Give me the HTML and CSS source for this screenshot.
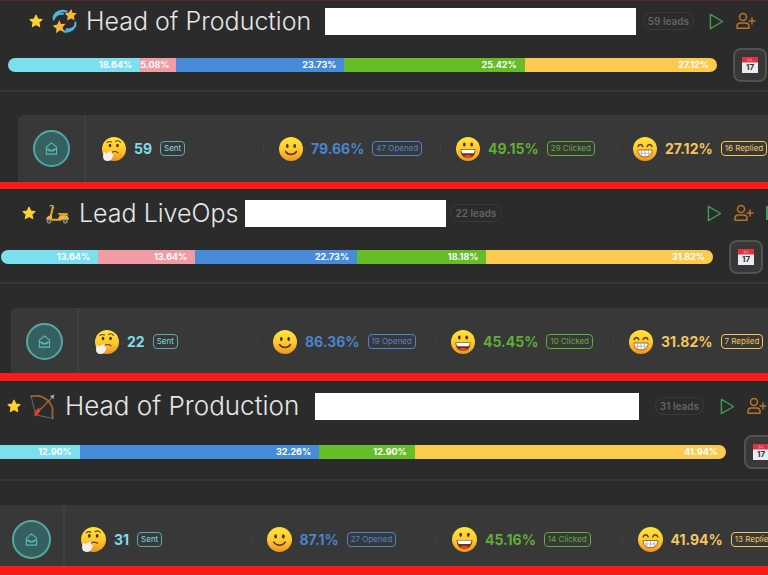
FILE: index.html
```
<!DOCTYPE html>
<html lang="en">
<head>
    <meta charset="UTF-8">
    <meta name="viewport" content="width=device-width, initial-scale=1.0">
    <title>Campaigns</title>
    <link rel="stylesheet" href="styles.css">
</head>
<body>
    <!-- shared icons -->
    <svg class="sprite" aria-hidden="true">
        <defs>
            <linearGradient id="face" x1="0" y1="0" x2="0" y2="1">
                <stop offset="0" stop-color="#ffe53b"/>
                <stop offset="0.55" stop-color="#fdc72e"/>
                <stop offset="1" stop-color="#ee9324"/>
            </linearGradient>
        </defs>
        <symbol id="star" viewBox="0 0 24 24">
            <path fill="#ffd22e" stroke="#ffd22e" stroke-width="2" stroke-linejoin="round" d="M12 2l3 6.700 7.200.8-5.400 4.900 1.500 7.100L12 17.900 5.700 21.500l1.500-7.100L1.800 9.500 9 8.700z"/>
        </symbol>
        <symbol id="dizzy" viewBox="0 0 24 24">
            <path fill="none" stroke="#4fb3dc" stroke-width="2" stroke-linecap="round" d="M1.500 8C3 2.500 9 .8 14 2.500M1.500 10c1-4 5-6 9-5.500M22.500 13c0 6-5 9.500-11 8.500M22.500 16c-2 3-5 4-8.500 3.500"/>
            <path fill="#fbb63a" d="M18.500 0l1.200 3.500 4.100.5-2.800 2.800.8 4-3.600-1.700-3.600 2 .5-4.100-2.900-2.800 4-.9zM7 10.500l1.600 4 4.400-.3-2.900 3.500 1.700 4.200-4.200-1.600-3.600 2.900.2-4.600L.5 16l4.600-1.200z"/>
        </symbol>
        <symbol id="scooter" viewBox="0 0 24 24">
            <path fill="none" stroke="#b9a27a" stroke-width="1.300" stroke-linecap="round" d="M5 4.500h2.500l.5 2"/>
            <path fill="none" stroke="#e6a92c" stroke-width="2" stroke-linecap="round" stroke-linejoin="round" d="M7.500 6l-2.500 11M7 18h8"/>
            <path fill="#efb536" d="M1 18c.5-3.500 3-4.500 5.500-4l.5 4zM12.500 18c0-3 2-4.500 5-4.500 3.500 0 5.500 1.500 5.500 4.500z"/>
            <path fill="#d99a2b" d="M12.500 11.500h9l1 2.500h-9z"/>
            <circle cx="4" cy="19.500" r="2.300" fill="#8d8d8d"/><circle cx="4" cy="19.500" r="1" fill="#333"/>
            <circle cx="19.500" cy="19.500" r="2.300" fill="#8d8d8d"/><circle cx="19.500" cy="19.500" r="1" fill="#333"/>
        </symbol>
        <symbol id="bow" viewBox="0 0 24 24">
            <path fill="none" stroke="#777" stroke-width="0.800" d="M1 2l4.500 18L22 23.500"/>
            <path fill="none" stroke="#9a6435" stroke-width="1.700" stroke-linecap="round" d="M1 2c3 .8 5-1.500 10 .5 5 2 9 6 10.500 11 .8 4-1 6 .5 10"/>
            <path stroke="#a5673a" stroke-width="1.200" d="M6 19L22 2.500"/>
            <path fill="#a4a7aa" d="M23.500.5l-1 4.500-3.500-3z"/>
            <path fill="#e0402b" d="M4 21l1-5 4-3 .5 3.500-2.500 4z"/>
        </symbol>
        <symbol id="thinking" viewBox="0 0 24 24">
            <circle cx="12" cy="12" r="12" fill="url(#face)"/>
            <ellipse cx="8" cy="8.500" rx="1.300" ry="1.800" fill="#4a2d12"/>
            <ellipse cx="15.500" cy="8.500" rx="1.300" ry="1.800" fill="#4a2d12"/>
            <path fill="none" stroke="#6b3f12" stroke-width="1.100" stroke-linecap="round" d="M5 5.500c1.500-1.200 3-1.300 4.500-.5M13.500 4.500c2-1.200 3.800-.8 5 .8M9.500 15.500c2-1.200 4.500-1.200 6.500.2"/>
            <path fill="#f3efe9" d="M1.500 15.500c.8-.8 2-.3 2.200 1l4.800-2.300c1.500-.4 2 1.200.8 2l1.700.8c.8 1.300.3 2.300-.5 3-.5 2.700-2.500 4-5 4-3 0-4.500-1.700-4.500-4.500z"/>
        </symbol>
        <symbol id="smile" viewBox="0 0 24 24">
            <circle cx="12" cy="12" r="12" fill="url(#face)"/>
            <ellipse cx="8.300" cy="9" rx="1.300" ry="2" fill="#4a2d12"/>
            <ellipse cx="15.700" cy="9" rx="1.300" ry="2" fill="#4a2d12"/>
            <path fill="none" stroke="#5b3411" stroke-width="1.400" stroke-linecap="round" d="M6.500 14.500c2.800 4 8.200 4 11 0"/>
        </symbol>
        <symbol id="grin" viewBox="0 0 24 24">
            <circle cx="12" cy="12" r="12" fill="url(#face)"/>
            <ellipse cx="8.300" cy="7.500" rx="1.300" ry="2" fill="#4a2d12"/>
            <ellipse cx="15.700" cy="7.500" rx="1.300" ry="2" fill="#4a2d12"/>
            <path fill="#6b3114" d="M4.500 12.500h15c0 5-3 8.500-7.500 8.500s-7.500-3.500-7.500-8.500z"/>
            <path fill="#fff" d="M5.300 13h13.400c0 1.800-.6 3.200-1.500 3.200H6.800c-.9 0-1.500-1.400-1.500-3.200z"/>
            <path fill="#e0502e" d="M8 19.300c2-1.800 6-1.800 8 0-2.400 2-5.600 2-8 0z"/>
        </symbol>
        <symbol id="beam" viewBox="0 0 24 24">
            <circle cx="12" cy="12" r="12" fill="url(#face)"/>
            <path fill="none" stroke="#5b3411" stroke-width="1.400" stroke-linecap="round" d="M5 9.500c.8-2.700 4-2.700 4.800 0M14.200 9.500c.8-2.700 4-2.700 4.800 0"/>
            <path fill="#fff" stroke="#8a4d1a" stroke-width="0.800" stroke-linejoin="round" d="M5 13h14c.3 4-2.500 6.800-7 6.800S4.700 17 5 13z"/>
            <path fill="none" stroke="#a8a29a" stroke-width="0.700" d="M5.500 16.300h13M8.500 13v6M12 13v6.500M15.500 13v6"/>
        </symbol>
        <symbol id="play" viewBox="0 0 16 18">
            <path fill="none" stroke="currentColor" stroke-width="1.500" stroke-linejoin="round" d="M1.500 1.500v15l13-7.500z"/>
        </symbol>
        <symbol id="add-user" viewBox="0 0 20 18">
            <g fill="none" stroke="currentColor" stroke-width="1.500" stroke-linecap="round" stroke-linejoin="round">
                <circle cx="7" cy="5" r="3.500"/>
                <path d="M4.500 11h5c2.300 0 3.500 1.500 3.500 3.300v1.900H1v-1.900C1 12.500 2.200 11 4.500 11zM16 6v6M13 9h6"/>
            </g>
        </symbol>
        <symbol id="calendar" viewBox="0 0 18 18">
            <path fill="#e8edf2" d="M1 5h16v12H1z"/>
            <path fill="#dd3440" d="M1 1h16v5.500H1z"/>
            <path fill="none" stroke="#f08a8f" stroke-width="0.900" d="M6.500 3h1.500v2H6.500M10 2.500v2.500h1.500"/>
        </symbol>
        <symbol id="mail" viewBox="0 0 14 14">
            <g fill="none" stroke="currentColor" stroke-width="1.200" stroke-linejoin="round" stroke-linecap="round">
                <path d="M1.500 5.500L7 1l5.500 4.500V13h-11zM1.500 7L5 9.500h4L12.500 7M4 7.500c1.500 2.200 4.500 2.200 6 0"/>
            </g>
        </symbol>
    </svg>

    <main class="campaigns">
        <section class="campaign campaign-first">
            <header class="campaign-head">
                <button class="icon-btn" type="button" aria-label="Favourite"><svg class="star"><use href="#star"/></svg></button>
                <svg class="title-emoji"><use href="#dizzy"/></svg>
                <h2 class="title">Head of Production</h2>
                <div class="hidden-name"></div>
                <span class="leads">59 leads</span>
                <div class="actions">
                    <button class="icon-btn green" type="button" aria-label="Start"><svg class="play"><use href="#play"/></svg></button>
                    <button class="icon-btn orange" type="button" aria-label="Add lead"><svg class="add-user"><use href="#add-user"/></svg></button>
                </div>
            </header>
            <div class="progress-row">
                <div class="progress">
                    <div class="segment seg-sent" style="width: 18.64%">18.64%</div>
                    <div class="segment seg-bounced" style="width: 5.08%">5.08%</div>
                    <div class="segment seg-opened" style="width: 23.73%">23.73%</div>
                    <div class="segment seg-clicked" style="width: 25.42%">25.42%</div>
                    <div class="segment seg-replied" style="width: 27.12%">27.12%</div>
                </div>
                <button class="calendar-btn" type="button" aria-label="Schedule"><svg><use href="#calendar"/><text class="cal-day" x="9" y="14" text-anchor="middle">17</text></svg></button>
            </div>
            <div class="stats">
                <div class="stage"><span class="stage-icon"><svg><use href="#mail"/></svg></span></div>
                <div class="stat sent"><svg class="emoji"><use href="#thinking"/></svg><strong>59</strong><span class="tag">Sent</span></div>
                <div class="stat opened"><svg class="emoji"><use href="#smile"/></svg><strong>79.66%</strong><span class="tag">47 Opened</span></div>
                <div class="stat clicked"><svg class="emoji"><use href="#grin"/></svg><strong>49.15%</strong><span class="tag">29 Clicked</span></div>
                <div class="stat replied"><svg class="emoji"><use href="#beam"/></svg><strong>27.12%</strong><span class="tag">16 Replied</span></div>
            </div>
        </section>

        <section class="campaign campaign-second">
            <header class="campaign-head">
                <button class="icon-btn" type="button" aria-label="Favourite"><svg class="star"><use href="#star"/></svg></button>
                <svg class="title-emoji"><use href="#scooter"/></svg>
                <h2 class="title">Lead LiveOps</h2>
                <div class="hidden-name"></div>
                <span class="leads">22 leads</span>
                <div class="actions">
                    <button class="icon-btn green" type="button" aria-label="Start"><svg class="play"><use href="#play"/></svg></button>
                    <button class="icon-btn orange" type="button" aria-label="Add lead"><svg class="add-user"><use href="#add-user"/></svg></button>
                    <span class="more"></span>
                </div>
            </header>
            <div class="progress-row">
                <div class="progress">
                    <div class="segment seg-sent" style="width: 13.64%">13.64%</div>
                    <div class="segment seg-bounced" style="width: 13.64%">13.64%</div>
                    <div class="segment seg-opened" style="width: 22.73%">22.73%</div>
                    <div class="segment seg-clicked" style="width: 18.18%">18.18%</div>
                    <div class="segment seg-replied" style="width: 31.82%">31.82%</div>
                </div>
                <button class="calendar-btn" type="button" aria-label="Schedule"><svg><use href="#calendar"/><text class="cal-day" x="9" y="14" text-anchor="middle">17</text></svg></button>
            </div>
            <div class="stats">
                <div class="stage"><span class="stage-icon"><svg><use href="#mail"/></svg></span></div>
                <div class="stat sent"><svg class="emoji"><use href="#thinking"/></svg><strong>22</strong><span class="tag">Sent</span></div>
                <div class="stat opened"><svg class="emoji"><use href="#smile"/></svg><strong>86.36%</strong><span class="tag">19 Opened</span></div>
                <div class="stat clicked"><svg class="emoji"><use href="#grin"/></svg><strong>45.45%</strong><span class="tag">10 Clicked</span></div>
                <div class="stat replied"><svg class="emoji"><use href="#beam"/></svg><strong>31.82%</strong><span class="tag">7 Replied</span></div>
            </div>
        </section>

        <section class="campaign campaign-third">
            <header class="campaign-head">
                <button class="icon-btn" type="button" aria-label="Favourite"><svg class="star"><use href="#star"/></svg></button>
                <svg class="title-emoji"><use href="#bow"/></svg>
                <h2 class="title">Head of Production</h2>
                <div class="hidden-name"></div>
                <span class="leads">31 leads</span>
                <div class="actions">
                    <button class="icon-btn green" type="button" aria-label="Start"><svg class="play"><use href="#play"/></svg></button>
                    <button class="icon-btn orange" type="button" aria-label="Add lead"><svg class="add-user"><use href="#add-user"/></svg></button>
                </div>
            </header>
            <div class="progress-row">
                <div class="progress">
                    <div class="segment seg-sent" style="width: 12.90%">12.90%</div>
                    <div class="segment seg-opened" style="width: 32.26%">32.26%</div>
                    <div class="segment seg-clicked" style="width: 12.90%">12.90%</div>
                    <div class="segment seg-replied" style="width: 41.94%">41.94%</div>
                </div>
                <button class="calendar-btn" type="button" aria-label="Schedule"><svg><use href="#calendar"/><text class="cal-day" x="9" y="14" text-anchor="middle">17</text></svg></button>
            </div>
            <div class="stats">
                <div class="stage"><span class="stage-icon"><svg><use href="#mail"/></svg></span></div>
                <div class="stat sent"><svg class="emoji"><use href="#thinking"/></svg><strong>31</strong><span class="tag">Sent</span></div>
                <div class="stat opened"><svg class="emoji"><use href="#smile"/></svg><strong>87.1%</strong><span class="tag">27 Opened</span></div>
                <div class="stat clicked"><svg class="emoji"><use href="#grin"/></svg><strong>45.16%</strong><span class="tag">14 Clicked</span></div>
                <div class="stat replied"><svg class="emoji"><use href="#beam"/></svg><strong>41.94%</strong><span class="tag">13 Replied</span></div>
            </div>
        </section>
    </main>
</body>
</html>
```

FILE: styles.css
```
* {
    box-sizing: border-box;
}
body {
    margin: 0;
    background-color: #fb1a1a;
    font-family: Inter, "Liberation Sans", sans-serif;
    overflow: hidden;
}
button {
    font: inherit;
    cursor: pointer;
}
svg {
    display: block;
    flex-shrink: 0;
}
.sprite {
    position: absolute;
    width: 0;
    height: 0;
}
.campaigns {
    display: flex;
    flex-direction: column;
    gap: 7px;
}
.campaign {
    background-color: #2b2b2b;
    overflow: hidden;
}

/* header */
.campaign-head {
    display: flex;
    align-items: center;
    height: 30px;
}
.icon-btn {
    display: block;
    padding: 0;
    border: none;
    background: none;
}
.star {
    width: 14px;
    height: 14px;
}
.title-emoji {
    width: 25px;
    height: 25px;
    margin: 0 9px;
}
.title {
    margin: 0;
    color: #e6e6e6;
    font-size: 25px;
    line-height: 30px;
    font-weight: 300;
    white-space: nowrap;
}
.hidden-name {
    height: 27px;
    background-color: #fff;
    margin-left: auto;
}
.leads {
    padding: 0 4px;
    border: 1px solid #393939;
    border-radius: 9px;
    color: #636363;
    font-size: 10px;
    line-height: 16px;
    font-weight: 600;
    white-space: nowrap;
}
.actions {
    display: flex;
    align-items: center;
    gap: 12px;
}
.green {
    color: #3f9d55;
}
.orange {
    color: #b8742c;
}
.play {
    width: 15px;
    height: 17px;
}
.add-user {
    width: 20px;
    height: 18px;
}
.more {
    width: 2px;
    height: 14px;
    background-color: #3f9d55;
}

/* progress */
.progress-row {
    display: flex;
    align-items: center;
    gap: 16px;
    border-bottom: 2px solid #363636;
}
.progress {
    display: flex;
    flex: 1;
    height: 14px;
    border-radius: 7px;
    overflow: hidden;
}
.segment {
    padding-right: 8px;
    color: #fff;
    font-size: 9px;
    line-height: 14px;
    font-weight: 700;
    text-align: right;
    white-space: nowrap;
}
.seg-sent {
    background-color: #7bdff0;
}
.seg-bounced {
    background-color: #f19ca4;
}
.seg-opened {
    background-color: #488bd8;
}
.seg-clicked {
    background-color: #66bd28;
}
.seg-replied {
    background-color: #fbcb4f;
}
.calendar-btn {
    display: flex;
    align-items: center;
    justify-content: center;
    flex-shrink: 0;
    width: 34px;
    height: 34px;
    padding: 0;
    border: 2px solid #525252;
    border-radius: 8px;
    background-color: #383838;
}
.calendar-btn svg {
    width: 18px;
    height: 18px;
}
.cal-day {
    font-size: 8px;
    font-weight: 700;
    fill: #333;
}

/* stats */
.stats {
    display: grid;
    grid-template-columns: 68px repeat(4, 1fr);
    background-color: #383838;
    border-radius: 6px 0 0 0;
}
.stage {
    padding: 15px 0 15px 15px;
    border-right: 2px solid #404040;
}
.stage-icon {
    display: flex;
    align-items: center;
    justify-content: center;
    width: 37px;
    height: 37px;
    border: 2px solid #51a8a4;
    border-radius: 50%;
    background-color: #35605f;
    color: #5bbab4;
}
.stage-icon svg {
    width: 13px;
    height: 13px;
}
.stat {
    display: flex;
    align-items: center;
    gap: 8px;
    height: 37px;
    margin-top: 15px;
    padding-left: 16px;
    white-space: nowrap;
}
.stat + .stat {
    background: linear-gradient(#414141, #414141) left center / 1px 8px no-repeat;
}
.emoji {
    width: 24px;
    height: 24px;
}
.stat strong {
    font-size: 14px;
    line-height: 20px;
    font-weight: 700;
}
.tag {
    padding: 0 3px;
    border: 1px solid;
    border-radius: 4px;
    font-size: 8px;
    line-height: 13px;
}
.sent {
    color: #7fdbe8;
}
.opened {
    color: #4a84cc;
}
.clicked {
    color: #5fae35;
}
.replied {
    color: #f3c65c;
}
.sent .tag {
    border-color: #62a5ae;
}

.campaign-first {
    padding-top: 5px;
    border-top: 1px solid #5a2626;
}
.campaign-first .campaign-head {
    padding: 0 12px 0 29px;
}
.campaign-first .hidden-name {
    width: 311px;
}
.campaign-first .leads {
    margin: 0 15px 0 7px;
}
.campaign-first .progress-row {
    padding: 12px 1px 8px 8px;
}
.campaign-first .stats {
    margin: 23px -26px 0 18px;
}

.campaign-second {
    padding-top: 9px;
}
.campaign-second .campaign-head {
    padding-left: 22px;
}
.campaign-second .hidden-name {
    width: 201px;
    margin-left: 7px;
}
.campaign-second .leads {
    margin: 0 auto 0 4px;
}
.campaign-second .progress-row {
    padding: 12px 5px 8px 1px;
}
.campaign-second .stats {
    margin: 24px -23px 0 11px;
}
.campaign-second .stage {
    padding-bottom: 13px;
}

.campaign-third {
    margin-top: 1px;
    padding-top: 10px;
}
.campaign-third .campaign-head {
    padding: 0 1px 0 7px;
}
.campaign-third .title {
    font-size: 26px;
}
.campaign-third .title-emoji {
    margin-right: 10px;
}
.campaign-third .hidden-name {
    width: 324px;
}
.campaign-third .leads {
    margin: 0 16px;
}
.campaign-third .progress-row {
    gap: 18px;
    margin: 0 -10px 0 -16px;
    padding: 14px 0 10px;
}
.campaign-third .stats {
    margin: 24px -39px 0 -3px;
}
.campaign-third .stage {
    padding-bottom: 7px;
}
.campaign-third .stage-icon {
    width: 39px;
    height: 39px;
}
.campaign-third .stat {
    height: 39px;
}
.campaign-third .emoji {
    width: 25px;
    height: 25px;
}
```
